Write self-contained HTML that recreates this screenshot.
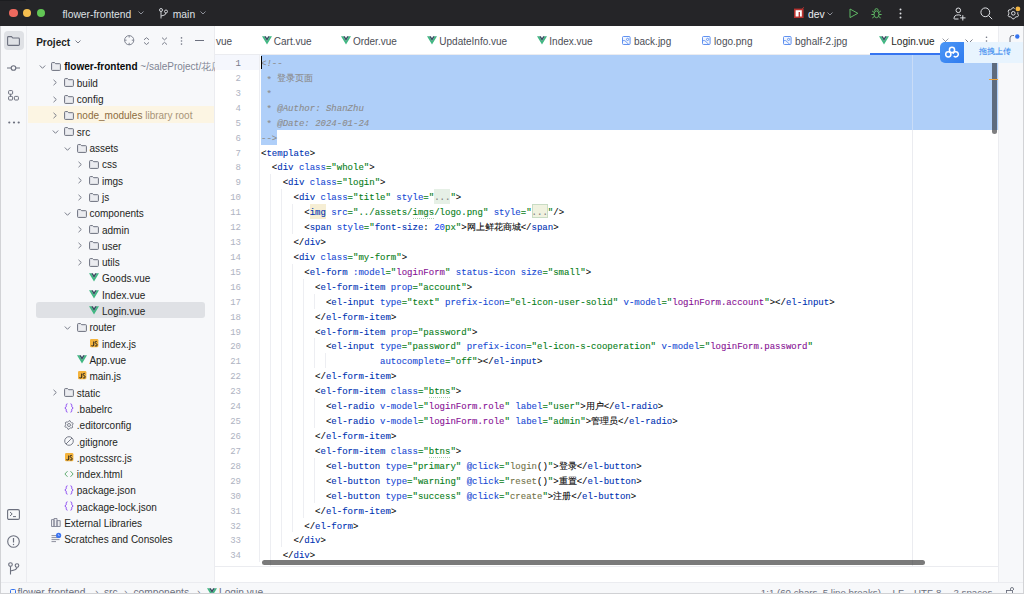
<!DOCTYPE html>
<html><head><meta charset="utf-8"><title>Login.vue</title>
<style>
*{margin:0;padding:0;box-sizing:border-box}
html,body{width:1024px;height:594px;overflow:hidden;background:#fff;font-family:"Liberation Sans",sans-serif}
.abs{position:absolute}
#title{position:absolute;left:0;top:0;width:1024px;height:26px;background:#252528}
.dot{position:absolute;top:8.6px;width:8.6px;height:8.6px;border-radius:50%}
.ttx{position:absolute;top:7.6px;font-size:10.3px;line-height:14px;color:#dfe1e5;white-space:nowrap}
#lstrip{position:absolute;left:0;top:26px;width:27px;height:556px;background:#f7f8fa;border-right:1px solid #ebecf0}
#proj{position:absolute;left:27px;top:26px;width:188px;height:556px;background:#f7f8fa;border-right:1px solid #ebecf0}
#editor{position:absolute;left:215px;top:26px;width:784px;height:556px;background:#fff}
#tabbar{position:absolute;left:215px;top:26px;width:784px;height:29px;background:#fff;border-bottom:1px solid #ebecf0}
#rstrip{position:absolute;left:998px;top:26px;width:26px;height:556px;background:#f7f8fa;border-left:1px solid #ebecf0}
#status{position:absolute;left:0;top:582px;width:1024px;height:12px;background:#f7f8fa;border-top:1px solid #ebecf0}
.ic{position:absolute;line-height:0}
.ic svg{display:block;overflow:visible}
.tt{position:absolute;font-size:10px;line-height:16px;height:16px;color:#1e1f22;white-space:nowrap;padding-top:1px}
.tt.b{font-weight:bold}
.gr{color:#818594;font-weight:normal}
.lib{color:#8c6c3e}
.libg{color:#a89478}
.sel{position:absolute;left:36px;width:169px;height:16px;background:#dfe1e5;border-radius:3px}
.libbg{position:absolute;left:28px;width:186px;height:16.3px;background:#fcf5e3}
.tab{position:absolute;top:35px;font-size:10px;line-height:14px;color:#4b4d55;white-space:nowrap}
.tab.cur{color:#1e1f22}
.cl{-webkit-text-stroke:0.1px currentColor;position:absolute;left:261px;height:14.92px;line-height:14.92px;font-family:"Liberation Mono",monospace;font-size:9.03px;white-space:pre;color:#080808;padding-top:2.0px}
.ln{position:absolute;left:215px;width:26px;height:14.92px;line-height:14.92px;font-family:"Liberation Mono",monospace;font-size:9.03px;text-align:right;color:#aeb3c2;padding-top:2.0px}
.ln.cur{color:#767a8a}
.t{color:#0033b3}.a{color:#174ad4}.v{color:#067d17}.p{color:#871094}.c{color:#8c8c8c;font-style:italic}.n{color:#1750eb}.f{color:#727248}.b{color:#080808}
.timg{color:#0033b3;background:#f6eed4;display:inline-block;height:14.92px;margin-top:-2.0px;padding-top:2.0px;vertical-align:top}
.fold{color:#808080;background:#e6f0e6;display:inline-block;height:14.92px;margin-top:-2.0px;padding-top:2.0px;vertical-align:top}
.fold2{color:#808080;background:#f0f2e0;display:inline-block;height:13.4px;margin-top:-1.8px;padding-top:1.8px;vertical-align:top;box-shadow:inset 0 0 0 1px #c9dcc4}
.st{position:absolute;top:585.5px;font-size:10.2px;line-height:14px;color:#6c707e;white-space:nowrap}

.cj{color:#8c8c8c;font-style:normal}

.ast{color:#8c8c8c;font-style:normal;position:relative;top:1.6px}
.typo{background-image:repeating-linear-gradient(90deg,rgba(6,125,23,.35) 0 1px,transparent 1px 2px);background-size:100% 1px;background-repeat:no-repeat;background-position:0 100%;padding-bottom:1px}

</style></head><body>
<div id="title">
  <div class="dot" style="left:9.3px;background:#ee6a5f"></div>
  <div class="dot" style="left:22.9px;background:#f5be4f"></div>
  <div class="dot" style="left:36.6px;background:#62c655"></div>
  <div class="ttx" style="left:62.5px">flower-frontend</div>
  <div class="ic" style="left:138px;top:11px"><svg width="6" height="4" viewBox="0 0 6 4"><path d="M0.5 0.5 L3 3 L5.5 0.5" fill="none" stroke="#9a9da6" stroke-width="0.9"/></svg></div>
  <div class="ic" style="left:158.5px;top:7.5px"><svg width="9" height="11" viewBox="0 0 9 11"><circle cx="2" cy="2" r="1.5" fill="none" stroke="#dfe1e5" stroke-width="0.9"/><circle cx="7" cy="3.5" r="1.5" fill="none" stroke="#dfe1e5" stroke-width="0.9"/><path d="M2 3.5 V10.5 M7 5 Q7 7.5 2 8" fill="none" stroke="#dfe1e5" stroke-width="0.9"/></svg></div>
  <div class="ttx" style="left:172.8px">main</div>
  <div class="ic" style="left:199.5px;top:11px"><svg width="6" height="4" viewBox="0 0 6 4"><path d="M0.5 0.5 L3 3 L5.5 0.5" fill="none" stroke="#9a9da6" stroke-width="0.9"/></svg></div>
  <div class="ic" style="left:793.8px;top:8.2px"><svg width="10" height="10" viewBox="0 0 10 10"><rect x="0" y="0.6" width="9.6" height="9.4" fill="#b83330"/><path d="M1.6 2.2 H7.8 V8.4 H6 V4 H4.6 V8.4 H1.6 Z" fill="#fff"/><path d="M8 1.2 L9.8 -0.8" stroke="#b83330" stroke-width="0.9"/></svg></div>
  <div class="ttx" style="left:808px;color:#ebecf0">dev</div>
  <div class="ic" style="left:827px;top:12px"><svg width="6" height="4" viewBox="0 0 6 4"><path d="M0.5 0.5 L3 3 L5.5 0.5" fill="none" stroke="#9a9da6" stroke-width="0.9"/></svg></div>
  <div class="ic" style="left:849px;top:8px"><svg width="10" height="11" viewBox="0 0 10 11"><path d="M1 1 L8.8 5.3 L1 9.6 Z" fill="none" stroke="#5fb865" stroke-width="1" stroke-linejoin="round"/></svg></div>
  <div class="ic" style="left:871.3px;top:7.6px"><svg width="11" height="10.5" viewBox="0 0 11 10.5"><path d="M3.7 2.9 Q3.7 0.6 5.5 0.6 Q7.3 0.6 7.3 2.9" fill="none" stroke="#5fb865" stroke-width="1"/><ellipse cx="5.5" cy="6.3" rx="2.5" ry="3.4" fill="none" stroke="#5fb865" stroke-width="1"/><path d="M3.1 4.4 L1.2 3 M7.9 4.4 L9.8 3 M3 6.5 H0.4 M8 6.5 H10.6 M3.2 8.6 L1.3 10 M7.8 8.6 L9.7 10" stroke="#5fb865" stroke-width="1"/></svg></div>
  <div class="ic" style="left:899px;top:8px"><svg width="3" height="11" viewBox="0 0 3 11"><circle cx="1.5" cy="1.5" r="1" fill="#dfe1e5"/><circle cx="1.5" cy="5.5" r="1" fill="#dfe1e5"/><circle cx="1.5" cy="9.5" r="1" fill="#dfe1e5"/></svg></div>
  <div class="ic" style="left:953px;top:6.6px"><svg width="14" height="14" viewBox="0 0 14 14"><circle cx="5.3" cy="3.3" r="2.3" fill="none" stroke="#dfe1e5" stroke-width="1"/><path d="M8 8.6 Q7 7.9 5.3 7.9 Q1 7.9 1 11.6 Q1 12 1.5 12 H5.5 M9.8 8.2 V13.5 M7.2 10.9 H12.5" fill="none" stroke="#dfe1e5" stroke-width="1"/></svg></div>
  <div class="ic" style="left:979.8px;top:6.5px"><svg width="13" height="13" viewBox="0 0 13 13"><circle cx="5.3" cy="5.3" r="4.4" fill="none" stroke="#dfe1e5" stroke-width="1"/><path d="M8.5 8.5 L12.2 12.2" stroke="#dfe1e5" stroke-width="1"/></svg></div>
  <div class="ic" style="left:1006.6px;top:6.6px"><svg width="14" height="13" viewBox="0 0 14 13"><path d="M5.57 0.75 L7.03 0.75 L8.02 2.14 L9.04 2.73 L10.74 2.89 L11.47 4.16 L10.76 5.71 L10.76 6.89 L11.47 8.44 L10.74 9.71 L9.04 9.87 L8.02 10.46 L7.03 11.85 L5.57 11.85 L4.58 10.46 L3.56 9.87 L1.86 9.71 L1.13 8.44 L1.84 6.89 L1.84 5.71 L1.13 4.16 L1.86 2.89 L3.56 2.73 L4.58 2.14 Z" fill="none" stroke="#dfe1e5" stroke-width="0.95" stroke-linejoin="round"/><circle cx="6.3" cy="6.3" r="1.8" fill="none" stroke="#dfe1e5" stroke-width="1"/><circle cx="10.9" cy="1.9" r="3.3" fill="#252528"/><circle cx="10.9" cy="1.9" r="2.4" fill="#f5b642"/></svg></div>
</div>

<div id="lstrip"></div>
<div class="abs" style="left:3.7px;top:30.7px;width:20px;height:19.5px;border-radius:4px;background:#dfe1e5"></div>
<div class="ic" style="left:7.2px;top:36px"><svg width="13" height="10" viewBox="0 0 13 10"><path d="M0.6 1.5 Q0.6 0.6 1.5 0.6 H4.5 L5.8 2 H11.5 Q12.4 2 12.4 2.9 V8.5 Q12.4 9.4 11.5 9.4 H1.5 Q0.6 9.4 0.6 8.5 Z" fill="none" stroke="#6c707e" stroke-width="1.1"/></svg></div>
<div class="ic" style="left:7px;top:64.5px"><svg width="13" height="6" viewBox="0 0 13 6"><circle cx="6.5" cy="3" r="2.3" fill="none" stroke="#6c707e" stroke-width="1.1"/><path d="M0 3 H4.2 M8.8 3 H13" stroke="#6c707e" stroke-width="1.1"/></svg></div>
<div class="ic" style="left:8px;top:89.5px"><svg width="11" height="11" viewBox="0 0 11 11"><rect x="0.6" y="0.6" width="4" height="3.6" rx="0.8" fill="none" stroke="#6c707e" stroke-width="1"/><rect x="0.6" y="6.4" width="4" height="3.6" rx="0.8" fill="none" stroke="#6c707e" stroke-width="1"/><rect x="6.4" y="6.4" width="4" height="3.6" rx="0.8" fill="none" stroke="#6c707e" stroke-width="1"/><path d="M2.6 4.2 V6.4" stroke="#6c707e" stroke-width="1"/></svg></div>
<div class="ic" style="left:7.5px;top:120.5px"><svg width="12" height="3" viewBox="0 0 12 3"><circle cx="1.3" cy="1.5" r="1.1" fill="#6c707e"/><circle cx="6" cy="1.5" r="1.1" fill="#6c707e"/><circle cx="10.7" cy="1.5" r="1.1" fill="#6c707e"/></svg></div>
<div class="ic" style="left:7px;top:508.5px"><svg width="13" height="11" viewBox="0 0 13 11"><rect x="0.6" y="0.6" width="11.8" height="9.8" rx="1.4" fill="none" stroke="#6c707e" stroke-width="1.1"/><path d="M3 3 L5.2 5 L3 7 M6 7.6 H9" fill="none" stroke="#6c707e" stroke-width="1"/></svg></div>
<div class="ic" style="left:7px;top:534.5px"><svg width="13" height="13" viewBox="0 0 13 13"><circle cx="6.5" cy="6.5" r="5.8" fill="none" stroke="#6c707e" stroke-width="1.1"/><path d="M6.5 3 V7.5" stroke="#6c707e" stroke-width="1.2"/><circle cx="6.5" cy="9.5" r="0.7" fill="#6c707e"/></svg></div>
<div class="ic" style="left:8px;top:562px"><svg width="12" height="13" viewBox="0 0 12 13"><circle cx="2.5" cy="2.5" r="1.8" fill="none" stroke="#6c707e" stroke-width="1.1"/><circle cx="9" cy="3.5" r="1.8" fill="none" stroke="#6c707e" stroke-width="1.1"/><path d="M2.5 4.3 V12.5 M9 5.3 Q9 8 2.5 9" fill="none" stroke="#6c707e" stroke-width="1.1"/></svg></div>

<div id="proj"></div>
<div class="abs" style="left:36.2px;top:35.8px;font-size:10px;line-height:14px;font-weight:bold;color:#1e1f22">Project</div>
<div class="ic" style="left:75px;top:39.5px"><svg width="6" height="4" viewBox="0 0 6 4"><path d="M0.5 0.5 L3 3 L5.5 0.5" fill="none" stroke="#6c707e" stroke-width="0.9"/></svg></div>
<div class="ic" style="left:123.6px;top:35.4px"><svg width="11" height="11" viewBox="0 0 11 11"><circle cx="5.2" cy="5.2" r="4.6" fill="none" stroke="#767a88" stroke-width="0.9"/><path d="M5.2 0.6 V2.6 M5.2 7.8 V9.8 M0.6 5.2 H2.6 M7.8 5.2 H9.8" stroke="#767a88" stroke-width="0.9"/></svg></div>
<div class="ic" style="left:143.4px;top:36.6px"><svg width="7" height="8" viewBox="0 0 7 8"><path d="M1 2.8 L3.5 0.7 L6 2.8 M1 5.4 L3.5 7.5 L6 5.4" fill="none" stroke="#6c707e" stroke-width="0.9"/></svg></div>
<div class="ic" style="left:161.2px;top:36.6px"><svg width="7" height="8" viewBox="0 0 7 8"><path d="M1 0.6 L3.5 2.9 L6 0.6 M1 7.6 L3.5 5.3 L6 7.6" fill="none" stroke="#6c707e" stroke-width="0.9"/></svg></div>
<div class="ic" style="left:180.4px;top:36.6px"><svg width="3" height="8" viewBox="0 0 3 8"><circle cx="1.5" cy="0.9" r="0.8" fill="#767a88"/><circle cx="1.5" cy="4" r="0.8" fill="#767a88"/><circle cx="1.5" cy="7.1" r="0.8" fill="#767a88"/></svg></div>
<div class="abs" style="left:195px;top:40px;width:9px;height:1px;background:#6c707e"></div>
<div class="ic" style="left:38.9px;top:64.0px"><svg width="7" height="6" viewBox="0 0 7 6"><path d="M0.8 1.5 L3.5 4.3 L6.2 1.5" fill="none" stroke="#6c707e" stroke-width="0.9"/></svg></div>
<div class="ic" style="left:51.3px;top:62.0px"><svg width="10" height="9" viewBox="0 0 10 9"><path d="M0.6 1.3 Q0.6 0.6 1.3 0.6 H3.6 L4.6 1.7 H8.7 Q9.4 1.7 9.4 2.4 V7.7 Q9.4 8.4 8.7 8.4 H1.3 Q0.6 8.4 0.6 7.7 Z" fill="#ebecf0" stroke="#6c707e" stroke-width="1"/></svg></div>
<div class="tt b" style="left:64.2px;top:58.40px">flower-frontend <span class="gr">~/saleProject/花店</span></div>
<div class="ic" style="left:52.1px;top:79.3px"><svg width="6" height="7" viewBox="0 0 6 7"><path d="M1.5 0.8 L4.3 3.5 L1.5 6.2" fill="none" stroke="#6c707e" stroke-width="0.9"/></svg></div>
<div class="ic" style="left:63.9px;top:78.3px"><svg width="10" height="9" viewBox="0 0 10 9"><path d="M0.6 1.3 Q0.6 0.6 1.3 0.6 H3.6 L4.6 1.7 H8.7 Q9.4 1.7 9.4 2.4 V7.7 Q9.4 8.4 8.7 8.4 H1.3 Q0.6 8.4 0.6 7.7 Z" fill="#ebecf0" stroke="#6c707e" stroke-width="1"/></svg></div>
<div class="tt" style="left:76.8px;top:74.71px">build</div>
<div class="ic" style="left:52.1px;top:95.6px"><svg width="6" height="7" viewBox="0 0 6 7"><path d="M1.5 0.8 L4.3 3.5 L1.5 6.2" fill="none" stroke="#6c707e" stroke-width="0.9"/></svg></div>
<div class="ic" style="left:63.9px;top:94.6px"><svg width="10" height="9" viewBox="0 0 10 9"><path d="M0.6 1.3 Q0.6 0.6 1.3 0.6 H3.6 L4.6 1.7 H8.7 Q9.4 1.7 9.4 2.4 V7.7 Q9.4 8.4 8.7 8.4 H1.3 Q0.6 8.4 0.6 7.7 Z" fill="#ebecf0" stroke="#6c707e" stroke-width="1"/></svg></div>
<div class="tt" style="left:76.8px;top:91.02px">config</div>
<div class="libbg" style="top:106.33px"></div>
<div class="ic" style="left:52.1px;top:111.9px"><svg width="6" height="7" viewBox="0 0 6 7"><path d="M1.5 0.8 L4.3 3.5 L1.5 6.2" fill="none" stroke="#6c707e" stroke-width="0.9"/></svg></div>
<div class="ic" style="left:63.9px;top:110.9px"><svg width="10" height="9" viewBox="0 0 10 9"><path d="M0.6 1.3 Q0.6 0.6 1.3 0.6 H3.6 L4.6 1.7 H8.7 Q9.4 1.7 9.4 2.4 V7.7 Q9.4 8.4 8.7 8.4 H1.3 Q0.6 8.4 0.6 7.7 Z" fill="#ebecf0" stroke="#6c707e" stroke-width="1"/></svg></div>
<div class="tt lib" style="left:76.8px;top:107.33px">node_modules <span class="libg">library root</span></div>
<div class="ic" style="left:51.5px;top:129.2px"><svg width="7" height="6" viewBox="0 0 7 6"><path d="M0.8 1.5 L3.5 4.3 L6.2 1.5" fill="none" stroke="#6c707e" stroke-width="0.9"/></svg></div>
<div class="ic" style="left:63.9px;top:127.2px"><svg width="10" height="9" viewBox="0 0 10 9"><path d="M0.6 1.3 Q0.6 0.6 1.3 0.6 H3.6 L4.6 1.7 H8.7 Q9.4 1.7 9.4 2.4 V7.7 Q9.4 8.4 8.7 8.4 H1.3 Q0.6 8.4 0.6 7.7 Z" fill="#ebecf0" stroke="#6c707e" stroke-width="1"/></svg></div>
<div class="tt" style="left:76.8px;top:123.64px">src</div>
<div class="ic" style="left:64.1px;top:145.5px"><svg width="7" height="6" viewBox="0 0 7 6"><path d="M0.8 1.5 L3.5 4.3 L6.2 1.5" fill="none" stroke="#6c707e" stroke-width="0.9"/></svg></div>
<div class="ic" style="left:76.5px;top:143.5px"><svg width="10" height="9" viewBox="0 0 10 9"><path d="M0.6 1.3 Q0.6 0.6 1.3 0.6 H3.6 L4.6 1.7 H8.7 Q9.4 1.7 9.4 2.4 V7.7 Q9.4 8.4 8.7 8.4 H1.3 Q0.6 8.4 0.6 7.7 Z" fill="#ebecf0" stroke="#6c707e" stroke-width="1"/></svg></div>
<div class="tt" style="left:89.4px;top:139.95px">assets</div>
<div class="ic" style="left:77.3px;top:160.9px"><svg width="6" height="7" viewBox="0 0 6 7"><path d="M1.5 0.8 L4.3 3.5 L1.5 6.2" fill="none" stroke="#6c707e" stroke-width="0.9"/></svg></div>
<div class="ic" style="left:89.1px;top:159.9px"><svg width="10" height="9" viewBox="0 0 10 9"><path d="M0.6 1.3 Q0.6 0.6 1.3 0.6 H3.6 L4.6 1.7 H8.7 Q9.4 1.7 9.4 2.4 V7.7 Q9.4 8.4 8.7 8.4 H1.3 Q0.6 8.4 0.6 7.7 Z" fill="#ebecf0" stroke="#6c707e" stroke-width="1"/></svg></div>
<div class="tt" style="left:102.0px;top:156.26px">css</div>
<div class="ic" style="left:77.3px;top:177.2px"><svg width="6" height="7" viewBox="0 0 6 7"><path d="M1.5 0.8 L4.3 3.5 L1.5 6.2" fill="none" stroke="#6c707e" stroke-width="0.9"/></svg></div>
<div class="ic" style="left:89.1px;top:176.2px"><svg width="10" height="9" viewBox="0 0 10 9"><path d="M0.6 1.3 Q0.6 0.6 1.3 0.6 H3.6 L4.6 1.7 H8.7 Q9.4 1.7 9.4 2.4 V7.7 Q9.4 8.4 8.7 8.4 H1.3 Q0.6 8.4 0.6 7.7 Z" fill="#ebecf0" stroke="#6c707e" stroke-width="1"/></svg></div>
<div class="tt" style="left:102.0px;top:172.57px">imgs</div>
<div class="ic" style="left:77.3px;top:193.5px"><svg width="6" height="7" viewBox="0 0 6 7"><path d="M1.5 0.8 L4.3 3.5 L1.5 6.2" fill="none" stroke="#6c707e" stroke-width="0.9"/></svg></div>
<div class="ic" style="left:89.1px;top:192.5px"><svg width="10" height="9" viewBox="0 0 10 9"><path d="M0.6 1.3 Q0.6 0.6 1.3 0.6 H3.6 L4.6 1.7 H8.7 Q9.4 1.7 9.4 2.4 V7.7 Q9.4 8.4 8.7 8.4 H1.3 Q0.6 8.4 0.6 7.7 Z" fill="#ebecf0" stroke="#6c707e" stroke-width="1"/></svg></div>
<div class="tt" style="left:102.0px;top:188.88px">js</div>
<div class="ic" style="left:64.1px;top:210.8px"><svg width="7" height="6" viewBox="0 0 7 6"><path d="M0.8 1.5 L3.5 4.3 L6.2 1.5" fill="none" stroke="#6c707e" stroke-width="0.9"/></svg></div>
<div class="ic" style="left:76.5px;top:208.8px"><svg width="10" height="9" viewBox="0 0 10 9"><path d="M0.6 1.3 Q0.6 0.6 1.3 0.6 H3.6 L4.6 1.7 H8.7 Q9.4 1.7 9.4 2.4 V7.7 Q9.4 8.4 8.7 8.4 H1.3 Q0.6 8.4 0.6 7.7 Z" fill="#ebecf0" stroke="#6c707e" stroke-width="1"/></svg></div>
<div class="tt" style="left:89.4px;top:205.19px">components</div>
<div class="ic" style="left:77.3px;top:226.1px"><svg width="6" height="7" viewBox="0 0 6 7"><path d="M1.5 0.8 L4.3 3.5 L1.5 6.2" fill="none" stroke="#6c707e" stroke-width="0.9"/></svg></div>
<div class="ic" style="left:89.1px;top:225.1px"><svg width="10" height="9" viewBox="0 0 10 9"><path d="M0.6 1.3 Q0.6 0.6 1.3 0.6 H3.6 L4.6 1.7 H8.7 Q9.4 1.7 9.4 2.4 V7.7 Q9.4 8.4 8.7 8.4 H1.3 Q0.6 8.4 0.6 7.7 Z" fill="#ebecf0" stroke="#6c707e" stroke-width="1"/></svg></div>
<div class="tt" style="left:102.0px;top:221.50px">admin</div>
<div class="ic" style="left:77.3px;top:242.4px"><svg width="6" height="7" viewBox="0 0 6 7"><path d="M1.5 0.8 L4.3 3.5 L1.5 6.2" fill="none" stroke="#6c707e" stroke-width="0.9"/></svg></div>
<div class="ic" style="left:89.1px;top:241.4px"><svg width="10" height="9" viewBox="0 0 10 9"><path d="M0.6 1.3 Q0.6 0.6 1.3 0.6 H3.6 L4.6 1.7 H8.7 Q9.4 1.7 9.4 2.4 V7.7 Q9.4 8.4 8.7 8.4 H1.3 Q0.6 8.4 0.6 7.7 Z" fill="#ebecf0" stroke="#6c707e" stroke-width="1"/></svg></div>
<div class="tt" style="left:102.0px;top:237.81px">user</div>
<div class="ic" style="left:77.3px;top:258.7px"><svg width="6" height="7" viewBox="0 0 6 7"><path d="M1.5 0.8 L4.3 3.5 L1.5 6.2" fill="none" stroke="#6c707e" stroke-width="0.9"/></svg></div>
<div class="ic" style="left:89.1px;top:257.7px"><svg width="10" height="9" viewBox="0 0 10 9"><path d="M0.6 1.3 Q0.6 0.6 1.3 0.6 H3.6 L4.6 1.7 H8.7 Q9.4 1.7 9.4 2.4 V7.7 Q9.4 8.4 8.7 8.4 H1.3 Q0.6 8.4 0.6 7.7 Z" fill="#ebecf0" stroke="#6c707e" stroke-width="1"/></svg></div>
<div class="tt" style="left:102.0px;top:254.12px">utils</div>
<div class="ic" style="left:89.1px;top:273.4px"><svg width="10" height="9" viewBox="0 0 10 9"><path d="M0 0.3 H2.2 L5 5 L7.8 0.3 H10 L5 8.6 Z" fill="#41b883"/><path d="M2.2 0.3 H3.9 L5 2.2 L6.1 0.3 H7.8 L5 5 Z" fill="#35495e"/></svg></div>
<div class="tt" style="left:102.0px;top:270.43px">Goods.vue</div>
<div class="ic" style="left:89.1px;top:289.7px"><svg width="10" height="9" viewBox="0 0 10 9"><path d="M0 0.3 H2.2 L5 5 L7.8 0.3 H10 L5 8.6 Z" fill="#41b883"/><path d="M2.2 0.3 H3.9 L5 2.2 L6.1 0.3 H7.8 L5 5 Z" fill="#35495e"/></svg></div>
<div class="tt" style="left:102.0px;top:286.74px">Index.vue</div>
<div class="sel" style="top:301.55px"></div>
<div class="ic" style="left:89.1px;top:306.0px"><svg width="10" height="9" viewBox="0 0 10 9"><path d="M0 0.3 H2.2 L5 5 L7.8 0.3 H10 L5 8.6 Z" fill="#41b883"/><path d="M2.2 0.3 H3.9 L5 2.2 L6.1 0.3 H7.8 L5 5 Z" fill="#35495e"/></svg></div>
<div class="tt" style="left:102.0px;top:303.05px">Login.vue</div>
<div class="ic" style="left:64.1px;top:325.0px"><svg width="7" height="6" viewBox="0 0 7 6"><path d="M0.8 1.5 L3.5 4.3 L6.2 1.5" fill="none" stroke="#6c707e" stroke-width="0.9"/></svg></div>
<div class="ic" style="left:76.5px;top:323.0px"><svg width="10" height="9" viewBox="0 0 10 9"><path d="M0.6 1.3 Q0.6 0.6 1.3 0.6 H3.6 L4.6 1.7 H8.7 Q9.4 1.7 9.4 2.4 V7.7 Q9.4 8.4 8.7 8.4 H1.3 Q0.6 8.4 0.6 7.7 Z" fill="#ebecf0" stroke="#6c707e" stroke-width="1"/></svg></div>
<div class="tt" style="left:89.4px;top:319.36px">router</div>
<div class="ic" style="left:90.2px;top:338.8px"><svg width="9" height="9" viewBox="0 0 9 9"><rect x="0" y="0" width="8.4" height="8.3" rx="1.3" fill="#f4b33c"/><path d="M3.7 2.4 V5.7 Q3.7 7 2.5 7 Q1.8 7 1.4 6.5" fill="none" stroke="#2e2a22" stroke-width="1.05"/><path d="M7.2 2.9 Q6.8 2.4 6.1 2.4 Q5.1 2.4 5.1 3.4 Q5.1 4.3 6.1 4.6 Q7.2 4.9 7.2 5.9 Q7.2 7 6.1 7 Q5.2 7 4.8 6.4" fill="none" stroke="#2e2a22" stroke-width="1"/></svg></div>
<div class="tt" style="left:102.0px;top:335.67px">index.js</div>
<div class="ic" style="left:76.5px;top:355.0px"><svg width="10" height="9" viewBox="0 0 10 9"><path d="M0 0.3 H2.2 L5 5 L7.8 0.3 H10 L5 8.6 Z" fill="#41b883"/><path d="M2.2 0.3 H3.9 L5 2.2 L6.1 0.3 H7.8 L5 5 Z" fill="#35495e"/></svg></div>
<div class="tt" style="left:89.4px;top:351.98px">App.vue</div>
<div class="ic" style="left:77.6px;top:371.4px"><svg width="9" height="9" viewBox="0 0 9 9"><rect x="0" y="0" width="8.4" height="8.3" rx="1.3" fill="#f4b33c"/><path d="M3.7 2.4 V5.7 Q3.7 7 2.5 7 Q1.8 7 1.4 6.5" fill="none" stroke="#2e2a22" stroke-width="1.05"/><path d="M7.2 2.9 Q6.8 2.4 6.1 2.4 Q5.1 2.4 5.1 3.4 Q5.1 4.3 6.1 4.6 Q7.2 4.9 7.2 5.9 Q7.2 7 6.1 7 Q5.2 7 4.8 6.4" fill="none" stroke="#2e2a22" stroke-width="1"/></svg></div>
<div class="tt" style="left:89.4px;top:368.29px">main.js</div>
<div class="ic" style="left:52.1px;top:389.2px"><svg width="6" height="7" viewBox="0 0 6 7"><path d="M1.5 0.8 L4.3 3.5 L1.5 6.2" fill="none" stroke="#6c707e" stroke-width="0.9"/></svg></div>
<div class="ic" style="left:63.9px;top:388.2px"><svg width="10" height="9" viewBox="0 0 10 9"><path d="M0.6 1.3 Q0.6 0.6 1.3 0.6 H3.6 L4.6 1.7 H8.7 Q9.4 1.7 9.4 2.4 V7.7 Q9.4 8.4 8.7 8.4 H1.3 Q0.6 8.4 0.6 7.7 Z" fill="#ebecf0" stroke="#6c707e" stroke-width="1"/></svg></div>
<div class="tt" style="left:76.8px;top:384.60px">static</div>
<div class="ic" style="left:63.9px;top:403.3px"><svg width="10" height="10" viewBox="0 0 10 10"><path d="M3.6 0.8 Q2.2 0.8 2.2 2 V3.9 L0.8 5 L2.2 6.1 V8 Q2.2 9.2 3.6 9.2 M6.4 0.8 Q7.8 0.8 7.8 2 V3.9 L9.2 5 L7.8 6.1 V8 Q7.8 9.2 6.4 9.2" fill="none" stroke="#9254f2" stroke-width="0.95" stroke-linejoin="miter"/></svg></div>
<div class="tt" style="left:76.8px;top:400.91px">.babelrc</div>
<div class="ic" style="left:63.9px;top:419.6px"><svg width="10" height="10" viewBox="0 0 10 10"><path d="M5.00 0.70 L6.11 0.85 L6.65 2.14 L7.33 2.67 L8.72 2.85 L9.15 3.89 L8.30 5.00 L8.19 5.85 L8.72 7.15 L8.04 8.04 L6.65 7.86 L5.85 8.19 L5.00 9.30 L3.89 9.15 L3.35 7.86 L2.67 7.33 L1.28 7.15 L0.85 6.11 L1.70 5.00 L1.81 4.15 L1.28 2.85 L1.96 1.96 L3.35 2.14 L4.15 1.81 Z" fill="none" stroke="#6c707e" stroke-width="0.85" stroke-linejoin="round"/><circle cx="5" cy="5" r="1.5" fill="none" stroke="#6c707e" stroke-width="0.85"/></svg></div>
<div class="tt" style="left:76.8px;top:417.22px">.editorconfig</div>
<div class="ic" style="left:63.9px;top:435.9px"><svg width="10" height="10" viewBox="0 0 10 10"><circle cx="5" cy="5" r="4.3" fill="none" stroke="#6c707e" stroke-width="0.9"/><path d="M2 8 L8 2" stroke="#6c707e" stroke-width="0.9"/></svg></div>
<div class="tt" style="left:76.8px;top:433.53px">.gitignore</div>
<div class="ic" style="left:65.0px;top:452.9px"><svg width="9" height="9" viewBox="0 0 9 9"><rect x="0" y="0" width="8.4" height="8.3" rx="1.3" fill="#f4b33c"/><path d="M3.7 2.4 V5.7 Q3.7 7 2.5 7 Q1.8 7 1.4 6.5" fill="none" stroke="#2e2a22" stroke-width="1.05"/><path d="M7.2 2.9 Q6.8 2.4 6.1 2.4 Q5.1 2.4 5.1 3.4 Q5.1 4.3 6.1 4.6 Q7.2 4.9 7.2 5.9 Q7.2 7 6.1 7 Q5.2 7 4.8 6.4" fill="none" stroke="#2e2a22" stroke-width="1"/></svg></div>
<div class="tt" style="left:76.8px;top:449.84px">.postcssrc.js</div>
<div class="ic" style="left:63.9px;top:468.5px"><svg width="10" height="10" viewBox="0 0 10 10"><path d="M3.5 2.2 L0.9 5 L3.5 7.8 M6.5 2.2 L9.1 5 L6.5 7.8" fill="none" stroke="#59a869" stroke-width="0.95"/></svg></div>
<div class="tt" style="left:76.8px;top:466.15px">index.html</div>
<div class="ic" style="left:63.9px;top:484.9px"><svg width="10" height="10" viewBox="0 0 10 10"><path d="M3.6 0.8 Q2.2 0.8 2.2 2 V3.9 L0.8 5 L2.2 6.1 V8 Q2.2 9.2 3.6 9.2 M6.4 0.8 Q7.8 0.8 7.8 2 V3.9 L9.2 5 L7.8 6.1 V8 Q7.8 9.2 6.4 9.2" fill="none" stroke="#9254f2" stroke-width="0.95" stroke-linejoin="miter"/></svg></div>
<div class="tt" style="left:76.8px;top:482.46px">package.json</div>
<div class="ic" style="left:63.9px;top:501.2px"><svg width="10" height="10" viewBox="0 0 10 10"><path d="M3.6 0.8 Q2.2 0.8 2.2 2 V3.9 L0.8 5 L2.2 6.1 V8 Q2.2 9.2 3.6 9.2 M6.4 0.8 Q7.8 0.8 7.8 2 V3.9 L9.2 5 L7.8 6.1 V8 Q7.8 9.2 6.4 9.2" fill="none" stroke="#9254f2" stroke-width="0.95" stroke-linejoin="miter"/></svg></div>
<div class="tt" style="left:76.8px;top:498.77px">package-lock.json</div>
<div class="ic" style="left:51.3px;top:517.5px"><svg width="10" height="9" viewBox="0 0 10 9"><path d="M0.5 1.6 H3 V8.5 H0.5 Z M3 0.5 H6 V8.5 H3 Z M6 2.6 H9.2 V8.5 H6 Z" fill="#ebecf0" stroke="#818594" stroke-width="0.9" stroke-linejoin="round"/></svg></div>
<div class="tt" style="left:64.2px;top:515.08px">External Libraries</div>
<div class="ic" style="left:51.3px;top:533.0px"><svg width="11" height="10" viewBox="0 0 11 10"><path d="M0.5 2.6 H5.2 M0.5 4.6 H8.5 M0.5 6.6 H8.5 M0.5 8.6 H5" stroke="#818594" stroke-width="0.9"/><circle cx="7.6" cy="2.4" r="2.6" fill="#3d74f0"/><path d="M7.3 1.3 L8.2 2.9" stroke="#fff" stroke-width="0.7"/></svg></div>
<div class="tt" style="left:64.2px;top:531.39px">Scratches and Consoles</div>

<div id="editor"></div>
<div id="tabbar"></div>
<div class="tab" style="left:216px">vue</div>
<div class="ic" style="left:261.5px;top:36.0px"><svg width="10" height="9" viewBox="0 0 10 9"><path d="M0 0.3 H2.2 L5 5 L7.8 0.3 H10 L5 8.6 Z" fill="#41b883"/><path d="M2.2 0.3 H3.9 L5 2.2 L6.1 0.3 H7.8 L5 5 Z" fill="#35495e"/></svg></div>
<div class="tab" style="left:273.8px">Cart.vue</div>
<div class="ic" style="left:340.6px;top:36.0px"><svg width="10" height="9" viewBox="0 0 10 9"><path d="M0 0.3 H2.2 L5 5 L7.8 0.3 H10 L5 8.6 Z" fill="#41b883"/><path d="M2.2 0.3 H3.9 L5 2.2 L6.1 0.3 H7.8 L5 5 Z" fill="#35495e"/></svg></div>
<div class="tab" style="left:352.9px">Order.vue</div>
<div class="ic" style="left:427px;top:36.0px"><svg width="10" height="9" viewBox="0 0 10 9"><path d="M0 0.3 H2.2 L5 5 L7.8 0.3 H10 L5 8.6 Z" fill="#41b883"/><path d="M2.2 0.3 H3.9 L5 2.2 L6.1 0.3 H7.8 L5 5 Z" fill="#35495e"/></svg></div>
<div class="tab" style="left:439.3px">UpdateInfo.vue</div>
<div class="ic" style="left:537px;top:36.0px"><svg width="10" height="9" viewBox="0 0 10 9"><path d="M0 0.3 H2.2 L5 5 L7.8 0.3 H10 L5 8.6 Z" fill="#41b883"/><path d="M2.2 0.3 H3.9 L5 2.2 L6.1 0.3 H7.8 L5 5 Z" fill="#35495e"/></svg></div>
<div class="tab" style="left:549.3px">Index.vue</div>
<div class="ic" style="left:622.0px;top:36.0px"><svg width="9" height="9" viewBox="0 0 9 9"><rect x="0.5" y="0.5" width="7.6" height="8" rx="1" fill="#f2f6fe" stroke="#4f86ee" stroke-width="0.9"/><path d="M0.6 4.6 H2.8 L6.8 8.4" fill="none" stroke="#4f86ee" stroke-width="0.8"/><circle cx="5.6" cy="3.4" r="1.1" fill="none" stroke="#4f86ee" stroke-width="0.8"/></svg></div>
<div class="tab" style="left:634.0px">back.jpg</div>
<div class="ic" style="left:702.0999999999999px;top:36.0px"><svg width="9" height="9" viewBox="0 0 9 9"><rect x="0.5" y="0.5" width="7.6" height="8" rx="1" fill="#f2f6fe" stroke="#4f86ee" stroke-width="0.9"/><path d="M0.6 4.6 H2.8 L6.8 8.4" fill="none" stroke="#4f86ee" stroke-width="0.8"/><circle cx="5.6" cy="3.4" r="1.1" fill="none" stroke="#4f86ee" stroke-width="0.8"/></svg></div>
<div class="tab" style="left:714.1px">logo.png</div>
<div class="ic" style="left:783.0px;top:36.0px"><svg width="9" height="9" viewBox="0 0 9 9"><rect x="0.5" y="0.5" width="7.6" height="8" rx="1" fill="#f2f6fe" stroke="#4f86ee" stroke-width="0.9"/><path d="M0.6 4.6 H2.8 L6.8 8.4" fill="none" stroke="#4f86ee" stroke-width="0.8"/><circle cx="5.6" cy="3.4" r="1.1" fill="none" stroke="#4f86ee" stroke-width="0.8"/></svg></div>
<div class="tab" style="left:795.0px">bghalf-2.jpg</div>
<div class="ic" style="left:879px;top:36.0px"><svg width="10" height="9" viewBox="0 0 10 9"><path d="M0 0.3 H2.2 L5 5 L7.8 0.3 H10 L5 8.6 Z" fill="#41b883"/><path d="M2.2 0.3 H3.9 L5 2.2 L6.1 0.3 H7.8 L5 5 Z" fill="#35495e"/></svg></div>
<div class="tab cur" style="left:891.3px">Login.vue</div>
<div class="ic" style="left:941.5px;top:37.5px"><svg width="7" height="7" viewBox="0 0 7 7"><path d="M0.6 0.6 L6.4 6.4 M6.4 0.6 L0.6 6.4" stroke="#8c8f99" stroke-width="0.9"/></svg></div>
<div class="abs" style="left:870px;top:52.5px;width:71px;height:2px;background:#3574f0"></div>
<div class="ic" style="left:965px;top:39px"><svg width="8" height="5" viewBox="0 0 8 5"><path d="M0.5 0.5 L4 4 L7.5 0.5" fill="none" stroke="#6c707e" stroke-width="0.9"/></svg></div>
<div class="ic" style="left:984.5px;top:36px"><svg width="3" height="10" viewBox="0 0 3 10"><circle cx="1.5" cy="1.3" r="0.8" fill="#6c707e"/><circle cx="1.5" cy="5" r="0.8" fill="#6c707e"/><circle cx="1.5" cy="8.7" r="0.8" fill="#6c707e"/></svg></div>

<!-- gutter current line -->
<div class="abs" style="left:215px;top:55px;width:44px;height:14.92px;background:#f5f7fd"></div>
<!-- selection -->
<div class="abs" style="left:261px;top:55px;width:737px;height:74.6px;background:#afcff9"></div>
<div class="abs" style="left:261px;top:129.6px;width:16.3px;height:14.92px;background:#afcff9"></div>
<div class="abs" style="left:912px;top:55px;width:1px;height:74.6px;background:#c9dcf7;z-index:1"></div>
<!-- margin guide -->
<div class="abs" style="left:912px;top:55px;width:1px;height:511px;background:#ebecf0"></div>
<!-- indent guides -->
<div class="abs" style="left:259.2px;top:55.00px;width:1px;height:507.28px;background:#edeef2"></div>
<div class="abs" style="left:270.3px;top:174.36px;width:1px;height:391.64px;background:#edeef2"></div>
<div class="abs" style="left:281.2px;top:189.28px;width:1px;height:358.08px;background:#edeef2"></div>
<div class="abs" style="left:292.0px;top:204.20px;width:1px;height:29.84px;background:#edeef2"></div>
<div class="abs" style="left:292.0px;top:263.88px;width:1px;height:268.56px;background:#edeef2"></div>
<div class="abs" style="left:302.9px;top:278.80px;width:1px;height:238.72px;background:#edeef2"></div>
<div class="abs" style="left:313.7px;top:293.72px;width:1px;height:14.92px;background:#edeef2"></div>
<div class="abs" style="left:313.7px;top:338.48px;width:1px;height:29.84px;background:#edeef2"></div>
<div class="abs" style="left:313.7px;top:398.16px;width:1px;height:29.84px;background:#edeef2"></div>
<div class="abs" style="left:313.7px;top:457.84px;width:1px;height:44.76px;background:#edeef2"></div>
<div class="abs" style="left:324.5px;top:353.40px;width:1px;height:14.92px;background:#edeef2"></div>
<div class="cl" style="top:55.00px"><span class="c">&lt;!--</span></div>
<div class="ln cur" style="top:55.00px">1</div>
<div class="cl" style="top:69.92px"><span class="c"> </span><span class="ast">*</span><span class="c"> </span><span class="cj">登录页面</span></div>
<div class="ln" style="top:69.92px">2</div>
<div class="cl" style="top:84.84px"><span class="c"> </span><span class="ast">*</span></div>
<div class="ln" style="top:84.84px">3</div>
<div class="cl" style="top:99.76px"><span class="c"> </span><span class="ast">*</span><span class="c"> @Author: ShanZhu</span></div>
<div class="ln" style="top:99.76px">4</div>
<div class="cl" style="top:114.68px"><span class="c"> </span><span class="ast">*</span><span class="c"> @Date: 2024-01-24</span></div>
<div class="ln" style="top:114.68px">5</div>
<div class="cl" style="top:129.60px"><span class="c">--&gt;</span></div>
<div class="ln" style="top:129.60px">6</div>
<div class="cl" style="top:144.52px"><span class="b">&lt;</span><span class="t">template</span><span class="b">&gt;</span></div>
<div class="ln" style="top:144.52px">7</div>
<div class="cl" style="top:159.44px"><span class="b">  &lt;</span><span class="t">div</span><span class="a"> class</span><span class="v">=&quot;whole&quot;</span><span class="b">&gt;</span></div>
<div class="ln" style="top:159.44px">8</div>
<div class="cl" style="top:174.36px"><span class="b">    &lt;</span><span class="t">div</span><span class="a"> class</span><span class="v">=&quot;login&quot;</span><span class="b">&gt;</span></div>
<div class="ln" style="top:174.36px">9</div>
<div class="cl" style="top:189.28px"><span class="b">      &lt;</span><span class="t">div</span><span class="a"> class</span><span class="v">=&quot;title&quot;</span><span class="a"> style</span><span class="v">=&quot;</span><span class="fold">...</span><span class="v">&quot;</span><span class="b">&gt;</span></div>
<div class="ln" style="top:189.28px">10</div>
<div class="cl" style="top:204.20px"><span class="b">        &lt;</span><span class="timg">img</span><span class="a"> src</span><span class="v">=&quot;../assets/</span><span class="v typo">imgs</span><span class="v">/logo.png&quot;</span><span class="a"> style</span><span class="v">=&quot;</span><span class="fold2">...</span><span class="v">&quot;</span><span class="b">/&gt;</span></div>
<div class="ln" style="top:204.20px">11</div>
<div class="cl" style="top:219.12px"><span class="b">        &lt;</span><span class="t">span</span><span class="a"> style</span><span class="v">=&quot;</span><span class="t">font-size</span><span class="b">: </span><span class="n">20</span><span class="v">px&quot;</span><span class="b">&gt;网上鲜花商城&lt;/</span><span class="t">span</span><span class="b">&gt;</span></div>
<div class="ln" style="top:219.12px">12</div>
<div class="cl" style="top:234.04px"><span class="b">      &lt;/</span><span class="t">div</span><span class="b">&gt;</span></div>
<div class="ln" style="top:234.04px">13</div>
<div class="cl" style="top:248.96px"><span class="b">      &lt;</span><span class="t">div</span><span class="a"> class</span><span class="v">=&quot;my-form&quot;</span><span class="b">&gt;</span></div>
<div class="ln" style="top:248.96px">14</div>
<div class="cl" style="top:263.88px"><span class="b">        &lt;</span><span class="t">el-form</span><span class="a"> :model</span><span class="v">=&quot;</span><span class="p">loginForm</span><span class="v">&quot;</span><span class="a"> status-icon size</span><span class="v">=&quot;small&quot;</span><span class="b">&gt;</span></div>
<div class="ln" style="top:263.88px">15</div>
<div class="cl" style="top:278.80px"><span class="b">          &lt;</span><span class="t">el-form-item</span><span class="a"> prop</span><span class="v">=&quot;account&quot;</span><span class="b">&gt;</span></div>
<div class="ln" style="top:278.80px">16</div>
<div class="cl" style="top:293.72px"><span class="b">            &lt;</span><span class="t">el-input</span><span class="a"> type</span><span class="v">=&quot;text&quot;</span><span class="a"> prefix-icon</span><span class="v">=&quot;el-icon-user-solid&quot;</span><span class="a"> v-model</span><span class="v">=&quot;</span><span class="p">loginForm.account</span><span class="v">&quot;</span><span class="b">&gt;&lt;/</span><span class="t">el-input</span><span class="b">&gt;</span></div>
<div class="ln" style="top:293.72px">17</div>
<div class="cl" style="top:308.64px"><span class="b">          &lt;/</span><span class="t">el-form-item</span><span class="b">&gt;</span></div>
<div class="ln" style="top:308.64px">18</div>
<div class="cl" style="top:323.56px"><span class="b">          &lt;</span><span class="t">el-form-item</span><span class="a"> prop</span><span class="v">=&quot;password&quot;</span><span class="b">&gt;</span></div>
<div class="ln" style="top:323.56px">19</div>
<div class="cl" style="top:338.48px"><span class="b">            &lt;</span><span class="t">el-input</span><span class="a"> type</span><span class="v">=&quot;password&quot;</span><span class="a"> prefix-icon</span><span class="v">=&quot;el-icon-s-cooperation&quot;</span><span class="a"> v-model</span><span class="v">=&quot;</span><span class="p">loginForm.password</span><span class="v">&quot;</span></div>
<div class="ln" style="top:338.48px">20</div>
<div class="cl" style="top:353.40px"><span class="a">                      autocomplete</span><span class="v">=&quot;off&quot;</span><span class="b">&gt;&lt;/</span><span class="t">el-input</span><span class="b">&gt;</span></div>
<div class="ln" style="top:353.40px">21</div>
<div class="cl" style="top:368.32px"><span class="b">          &lt;/</span><span class="t">el-form-item</span><span class="b">&gt;</span></div>
<div class="ln" style="top:368.32px">22</div>
<div class="cl" style="top:383.24px"><span class="b">          &lt;</span><span class="t">el-form-item</span><span class="a"> class</span><span class="v">=&quot;</span><span class="v typo">btns</span><span class="v">&quot;</span><span class="b">&gt;</span></div>
<div class="ln" style="top:383.24px">23</div>
<div class="cl" style="top:398.16px"><span class="b">            &lt;</span><span class="t">el-radio</span><span class="a"> v-model</span><span class="v">=&quot;</span><span class="p">loginForm.role</span><span class="v">&quot;</span><span class="a"> label</span><span class="v">=&quot;user&quot;</span><span class="b">&gt;用户&lt;/</span><span class="t">el-radio</span><span class="b">&gt;</span></div>
<div class="ln" style="top:398.16px">24</div>
<div class="cl" style="top:413.08px"><span class="b">            &lt;</span><span class="t">el-radio</span><span class="a"> v-model</span><span class="v">=&quot;</span><span class="p">loginForm.role</span><span class="v">&quot;</span><span class="a"> label</span><span class="v">=&quot;admin&quot;</span><span class="b">&gt;管理员&lt;/</span><span class="t">el-radio</span><span class="b">&gt;</span></div>
<div class="ln" style="top:413.08px">25</div>
<div class="cl" style="top:428.00px"><span class="b">          &lt;/</span><span class="t">el-form-item</span><span class="b">&gt;</span></div>
<div class="ln" style="top:428.00px">26</div>
<div class="cl" style="top:442.92px"><span class="b">          &lt;</span><span class="t">el-form-item</span><span class="a"> class</span><span class="v">=&quot;</span><span class="v typo">btns</span><span class="v">&quot;</span><span class="b">&gt;</span></div>
<div class="ln" style="top:442.92px">27</div>
<div class="cl" style="top:457.84px"><span class="b">            &lt;</span><span class="t">el-button</span><span class="a"> type</span><span class="v">=&quot;primary&quot;</span><span class="a"> @click</span><span class="v">=&quot;</span><span class="f">login</span><span class="b">()</span><span class="v">&quot;</span><span class="b">&gt;登录&lt;/</span><span class="t">el-button</span><span class="b">&gt;</span></div>
<div class="ln" style="top:457.84px">28</div>
<div class="cl" style="top:472.76px"><span class="b">            &lt;</span><span class="t">el-button</span><span class="a"> type</span><span class="v">=&quot;warning&quot;</span><span class="a"> @click</span><span class="v">=&quot;</span><span class="f">reset</span><span class="b">()</span><span class="v">&quot;</span><span class="b">&gt;重置&lt;/</span><span class="t">el-button</span><span class="b">&gt;</span></div>
<div class="ln" style="top:472.76px">29</div>
<div class="cl" style="top:487.68px"><span class="b">            &lt;</span><span class="t">el-button</span><span class="a"> type</span><span class="v">=&quot;success&quot;</span><span class="a"> @click</span><span class="v">=&quot;</span><span class="f">create</span><span class="v">&quot;</span><span class="b">&gt;注册&lt;/</span><span class="t">el-button</span><span class="b">&gt;</span></div>
<div class="ln" style="top:487.68px">30</div>
<div class="cl" style="top:502.60px"><span class="b">          &lt;/</span><span class="t">el-form-item</span><span class="b">&gt;</span></div>
<div class="ln" style="top:502.60px">31</div>
<div class="cl" style="top:517.52px"><span class="b">        &lt;/</span><span class="t">el-form</span><span class="b">&gt;</span></div>
<div class="ln" style="top:517.52px">32</div>
<div class="cl" style="top:532.44px"><span class="b">      &lt;/</span><span class="t">div</span><span class="b">&gt;</span></div>
<div class="ln" style="top:532.44px">33</div>
<div class="cl" style="top:547.36px"><span class="b">    &lt;/</span><span class="t">div</span><span class="b">&gt;</span></div>
<div class="ln" style="top:547.36px">34</div>
<!-- caret -->
<div class="abs" style="left:260.6px;top:56px;width:1.3px;height:12.6px;background:#000"></div>
<!-- editor bottom -->
<div class="abs" style="left:215px;top:566px;width:784px;height:1px;background:#ebecf0"></div>
<div class="abs" style="left:215px;top:567px;width:784px;height:15px;background:#fff"></div>
<!-- scrollbars -->
<div class="abs" style="left:262px;top:560px;width:663px;height:4.6px;border-radius:3px;background:rgba(40,40,40,0.62)"></div>
<div class="abs" style="left:992px;top:57.3px;width:5px;height:77px;border-radius:3px;background:rgba(40,40,44,0.6)"></div>
<div class="abs" style="left:989px;top:78.6px;width:9px;height:1px;background:#e9a23b"></div>

<div id="rstrip"></div>
<div class="ic" style="left:1008.5px;top:34px"><svg width="11" height="10" viewBox="0 0 11 10"><path d="M1 9.5 V4 Q1 1.5 3.5 1.5 H5" fill="none" stroke="#6c707e" stroke-width="1"/><circle cx="8.3" cy="2.5" r="2.2" fill="#3574f0"/></svg></div>
<!-- popup -->
<div class="abs" style="left:939.7px;top:41.7px;width:24px;height:21.5px;background:linear-gradient(135deg,#4c98f6,#2f7bef);border-radius:5px 0 0 5px"></div>
<div class="ic" style="left:944px;top:45.5px"><svg width="16" height="14" viewBox="0 0 16 14"><circle cx="8" cy="3.9" r="2.6" fill="none" stroke="#fff" stroke-width="1.5"/><circle cx="4.3" cy="8.3" r="2.6" fill="none" stroke="#fff" stroke-width="1.5"/><path d="M9.34 7.20 A2.6 2.6 0 1 1 10.21 10.43" fill="none" stroke="#fff" stroke-width="1.5" stroke-linecap="round"/></svg></div>
<div class="abs" style="left:963.7px;top:41.7px;width:61px;height:21.5px;background:#e8f4fe"></div>
<div class="abs" style="left:979.3px;top:45.8px;font-size:8.2px;line-height:12px;color:#3a8bf0;white-space:nowrap;-webkit-text-stroke:0.1px #3a8bf0">拖拽上传</div>

<div id="status"></div>
<div class="ic" style="left:9.5px;top:589px"><svg width="6" height="6" viewBox="0 0 6 6"><rect x="0.5" y="0.5" width="5" height="5" rx="1" fill="none" stroke="#3574f0" stroke-width="1"/></svg></div>
<div class="st" style="left:17.5px">flower-frontend</div>
<div class="st" style="left:95px">›</div>
<div class="st" style="left:104px">src</div>
<div class="st" style="left:124px">›</div>
<div class="st" style="left:133.5px">components</div>
<div class="st" style="left:197px">›</div>
<div class="ic" style="left:207px;top:588px"><svg width="10" height="9" viewBox="0 0 10 9"><path d="M0 0.3 H2.2 L5 5 L7.8 0.3 H10 L5 8.6 Z" fill="#41b883"/><path d="M2.2 0.3 H3.9 L5 2.2 L6.1 0.3 H7.8 L5 5 Z" fill="#35495e"/></svg></div>
<div class="st" style="left:219px">Login.vue</div>
<div class="st" style="left:760.8px;font-size:9.7px">1:1 (60 chars, 5 line breaks)</div>
<div class="st" style="left:892.5px;font-size:9.7px">LF</div>
<div class="st" style="left:914px;font-size:9.7px">UTF-8</div>
<div class="st" style="left:953.5px;font-size:9.7px">2 spaces</div>
<div class="ic" style="left:1006px;top:587px"><svg width="9" height="8" viewBox="0 0 9 8"><rect x="0.5" y="3.5" width="6" height="4.5" fill="none" stroke="#6c707e" stroke-width="0.9"/><path d="M4.5 3.5 V2 Q4.5 0.5 6 0.5 Q7.5 0.5 7.5 2 V3" fill="none" stroke="#6c707e" stroke-width="0.9"/></svg></div>
<!-- window edges -->
<div class="abs" style="left:0;top:26px;width:1px;height:568px;background:#d2d3d6;z-index:2"></div>
<div class="abs" style="left:1023px;top:26px;width:1px;height:568px;background:#d2d3d6;z-index:2"></div>
<div class="abs" style="left:0;top:593px;width:1024px;height:1px;background:#d0d1d4;z-index:2"></div>
<div class="abs" style="left:0;top:0;width:26px;height:1px;background:#1c1d20;z-index:2"></div>

</body></html>
